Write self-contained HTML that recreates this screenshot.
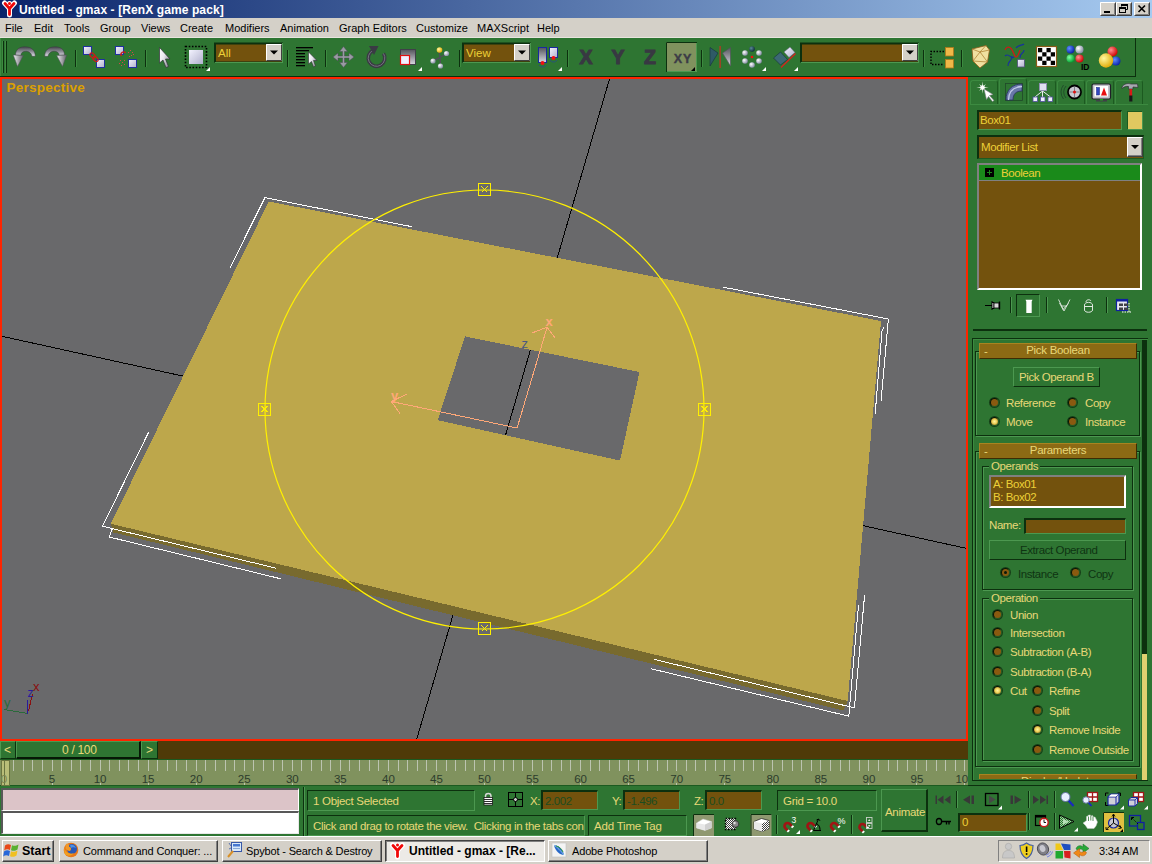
<!DOCTYPE html>
<html><head><meta charset="utf-8"><title>gmax</title>
<style>
html,body{margin:0;padding:0}
body{width:1152px;height:864px;position:relative;overflow:hidden;background:#2e7532;font-family:"Liberation Sans",sans-serif;font-size:11.5px}
.a{position:absolute;box-sizing:border-box}
.t{position:absolute;margin-top:1px;color:#e8d878;font-size:11.5px;letter-spacing:-0.42px;white-space:pre;line-height:13px}
.dk{color:#0e3412}
.sunk{border:1px solid;border-color:#0c300e #4c9850 #4c9850 #0c300e}
.rais{border:1px solid;border-color:#4c9850 #0c300e #0c300e #4c9850}
.brown{background:#73520d}
.hdr{background:#8c6a14;border:1px solid;border-color:#a88420 #3c2c04 #3c2c04 #a88420;color:#e8d878;text-align:center;font-size:11.5px;line-height:13px;letter-spacing:-0.3px}
.grp{border:1px solid #0c300e;box-shadow:1px 1px 0 #4c9850, inset 1px 1px 0 #4c9850}
.rad{position:absolute;width:9px;height:9px;border-radius:50%;background:#8a5a10;border:1px solid;border-color:#061806 #205c24 #205c24 #061806;box-sizing:border-box;box-shadow:0 0 0 1px #163f18}
.rad.on{background:radial-gradient(circle at 50% 50%,#fff0a0 0,#f0d860 40%,#8a5a10 100%)}
.rad.dis::after{content:"";position:absolute;left:2px;top:2px;width:3px;height:3px;border-radius:50%;background:#0a1a0a}
.sep{position:absolute;width:2px;border-left:1px solid #0c300e;border-right:1px solid #4c9850;box-sizing:border-box}
.tab{top:80px;width:28px;height:25px;border:1px solid;border-color:#3c8a40 #1c5a20 transparent #3c8a40;border-radius:3px 3px 0 0}
.tab.sel{top:78px;height:27px}
.tsb{background:#2e7532;border:1px solid;border-color:#4c9850 #0c300e #0c300e #4c9850}
.tbtn{top:840px;height:22px;background:#d4d0c8;border:1px solid;border-color:#fff #404040 #404040 #fff;box-shadow:inset -1px -1px 0 #808080}
.tbtn.act{background:#eceae6;border-color:#404040 #fff #fff #404040;box-shadow:inset 1px 1px 0 #808080}
.tl{top:845px;font-size:11px;line-height:13px;white-space:pre;letter-spacing:-0.15px}
.menu span{position:absolute;top:4px;font-size:11px;color:#000}
.win{font-family:"Liberation Sans",sans-serif;color:#000}
</style></head><body>

<!-- title bar -->
<div class="a" id="title" style="left:0;top:0;width:1152px;height:18px;background:linear-gradient(90deg,#0a246a,#a6caf0)"></div>
<div class="a" style="left:19px;top:3px;color:#fff;font-weight:bold;font-size:12px;line-height:15px;white-space:pre;letter-spacing:0.1px">Untitled - gmax - [RenX game pack]</div>

<!-- menu bar -->
<div class="a menu" id="menu" style="left:0;top:18px;width:1152px;height:20px;background:#d4d0c8;border-bottom:1px solid #e8e4de">
<span style="left:5px">File</span><span style="left:34px">Edit</span><span style="left:64px">Tools</span><span style="left:100px">Group</span><span style="left:141px">Views</span><span style="left:180px">Create</span><span style="left:225px">Modifiers</span><span style="left:280px">Animation</span><span style="left:339px">Graph Editors</span><span style="left:416px">Customize</span><span style="left:477px">MAXScript</span><span style="left:537px">Help</span>
</div>

<!-- toolbar -->
<div class="a" id="toolbar" style="left:0;top:38px;width:1152px;height:39px;background:#2e7532"></div>

<svg class="a" id="tbsvg" style="left:0;top:38px" width="1152" height="39" viewBox="0 38 1152 39">
<defs>
<linearGradient id="gGrey" x1="0" y1="0" x2="1" y2="1"><stop offset="0" stop-color="#e8e8ec"/><stop offset="1" stop-color="#50505a"/></linearGradient>
<linearGradient id="gArc" x1="0" y1="0" x2="0" y2="1"><stop offset="0" stop-color="#44444c"/><stop offset="0.5" stop-color="#8c8c96"/><stop offset="1" stop-color="#e0e0e8"/></linearGradient><linearGradient id="gHead" x1="0" y1="0" x2="1" y2="0"><stop offset="0" stop-color="#f0f0f4"/><stop offset="1" stop-color="#606068"/></linearGradient>
<linearGradient id="gCur" x1="0" y1="0" x2="1" y2="0.6"><stop offset="0" stop-color="#ffffff"/><stop offset="0.5" stop-color="#e8e8ee"/><stop offset="1" stop-color="#909098"/></linearGradient>
<linearGradient id="gGreyV" x1="0" y1="0" x2="0" y2="1"><stop offset="0" stop-color="#54545c"/><stop offset="1" stop-color="#d8d8e0"/></linearGradient>
<linearGradient id="gSq" x1="0" y1="0" x2="1" y2="1"><stop offset="0" stop-color="#f4f4ff"/><stop offset="1" stop-color="#b0b0cc"/></linearGradient>
<radialGradient id="gBall" cx="0.35" cy="0.35" r="0.7"><stop offset="0" stop-color="#fff"/><stop offset="1" stop-color="#8088a0"/></radialGradient>
<radialGradient id="gTeal" cx="0.35" cy="0.35" r="0.7"><stop offset="0" stop-color="#5a8a98"/><stop offset="1" stop-color="#0c2c38"/></radialGradient>
<radialGradient id="gYel" cx="0.35" cy="0.35" r="0.7"><stop offset="0" stop-color="#fff8a0"/><stop offset="1" stop-color="#e0a800"/></radialGradient>
<radialGradient id="gRed" cx="0.35" cy="0.35" r="0.7"><stop offset="0" stop-color="#ff9090"/><stop offset="1" stop-color="#d00000"/></radialGradient>
<radialGradient id="gBlu" cx="0.35" cy="0.35" r="0.7"><stop offset="0" stop-color="#6090ff"/><stop offset="1" stop-color="#0820a8"/></radialGradient>
<radialGradient id="gGrn" cx="0.35" cy="0.35" r="0.7"><stop offset="0" stop-color="#80ffa0"/><stop offset="1" stop-color="#00a030"/></radialGradient>
</defs>
<!-- grip -->
<rect x="0" y="38" width="1" height="38" fill="#3c8a40"/><rect x="3" y="41" width="1" height="32" fill="#0c300e"/><rect x="2" y="41" width="1" height="32" fill="#3c8a40"/>
<rect x="6" y="41" width="1" height="32" fill="#0c300e"/><rect x="5" y="41" width="1" height="32" fill="#3c8a40"/>
<!-- undo -->
<path d="M15.5 55 C15.5 49 20 46.8 25 46.8 C31 46.8 35.3 50 35.3 56.3 L32 56.3 C31 52.5 28.5 51.3 25.8 51.3 C23 51.3 21 52.5 20.8 55.3 Z" fill="url(#gArc)" stroke="#383840" stroke-width="0.5"/><path d="M13.3 55 L23.3 55.5 L17.5 66.5 Z" fill="url(#gHead)" stroke="#505058" stroke-width="0.5"/>
<!-- redo -->
<path d="M 64.5 55.0 C 64.5 49.0 60.0 46.8 55.0 46.8 C 49.0 46.8 44.7 50.0 44.7 56.3 L 48.0 56.3 C 49.0 52.5 51.5 51.3 54.2 51.3 C 57.0 51.3 59.0 52.5 59.2 55.3 Z" fill="url(#gArc)" stroke="#383840" stroke-width="0.5"/><path d="M 66.7 55.0 L 56.7 55.5 L 62.5 66.5 Z" fill="url(#gHead)" stroke="#505058" stroke-width="0.5"/>
<rect x="75" y="50" width="1" height="17" fill="#0c300e"/><rect x="76" y="50" width="1" height="17" fill="#3c8a40"/>
<!-- link -->
<rect x="83.500" y="46.500" width="8" height="8" fill="url(#gSq)" stroke="#2030a0"/>
<rect x="96.500" y="59.500" width="8" height="8" fill="url(#gSq)" stroke="#2030a0"/>
<ellipse cx="92.500" cy="55.500" rx="2" ry="3" transform="rotate(-45 92.500 55.500)" fill="none" stroke="#d01818" stroke-width="1.2"/>
<ellipse cx="95.500" cy="59" rx="2" ry="3" transform="rotate(-45 95.500 59)" fill="none" stroke="#d01818" stroke-width="1.2"/>
<!-- unlink -->
<rect x="115.500" y="46.500" width="8" height="8" fill="url(#gSq)" stroke="#2030a0"/>
<rect x="128.500" y="59.500" width="8" height="8" fill="url(#gSq)" stroke="#2030a0"/>
<path d="M121.500 56 A2.500 2.500 0 0 1 125.500 53" fill="none" stroke="#d01818" stroke-width="1.3"/>
<g fill="#d04848"><rect x="128" y="52" width="1" height="1"/><rect x="130" y="50" width="1" height="1"/><rect x="132" y="52" width="1" height="1"/><rect x="131" y="55" width="1" height="1"/><rect x="133" y="54" width="1" height="1"/><rect x="129" y="56" width="1" height="1"/><rect x="120" y="60" width="1" height="1"/><rect x="122" y="62" width="1" height="1"/><rect x="119" y="63" width="1" height="1"/><rect x="124" y="60" width="1" height="1"/><rect x="121" y="65" width="1" height="1"/><rect x="124" y="64" width="1" height="1"/></g>
<rect x="145" y="50" width="1" height="17" fill="#0c300e"/><rect x="146" y="50" width="1" height="17" fill="#3c8a40"/>
<!-- select arrow -->
<path d="M159.500 47.500 L159.500 63 L163 60 L166 67.500 L168.500 66.500 L165.500 59 L170 59 Z" fill="url(#gCur)" stroke="#303038" stroke-width="0.7"/>
<!-- region select -->
<rect x="185.500" y="46.500" width="21" height="21" fill="none" stroke="#000" stroke-width="1.6" stroke-dasharray="1.6 1.6"/>
<rect x="189" y="50" width="14" height="14" fill="url(#gSq)"/>
<path d="M210 67 L210 71 L206 71 Z" fill="#fff"/>
<!-- All dropdown -->
<rect x="214" y="42.500" width="69" height="20" fill="#0c300e"/><rect x="215" y="62" width="68" height="1" fill="#4c9850"/><rect x="282" y="43" width="1" height="20" fill="#4c9850"/>
<rect x="216" y="44.500" width="66" height="17" fill="#73520d"/>
<rect x="266" y="44" width="16" height="17" fill="#d4d0c8"/><path d="M266.500 60.500 L266.500 44.500 L281.500 44.500" fill="none" stroke="#fff"/><path d="M266.500 60.500 L281.500 60.500 L281.500 44.500" fill="none" stroke="#404040"/>
<path d="M270 50.500 L278 50.500 L274 54.500 Z" fill="#000"/>
<text x="218" y="57" font-family="Liberation Sans, sans-serif" font-size="11.500" fill="#ecd038">All</text>
<rect x="287" y="50" width="1" height="17" fill="#0c300e"/><rect x="288" y="50" width="1" height="17" fill="#3c8a40"/>
<!-- select by name -->
<g fill="#000"><rect x="296" y="47" width="17" height="1.3"/><rect x="296" y="50" width="13" height="1.3"/><rect x="296" y="53" width="9" height="1.3"/><rect x="296" y="56" width="9" height="1.3"/><rect x="296" y="59" width="9" height="1.3"/><rect x="296" y="62" width="9" height="1.3"/><rect x="296" y="65" width="9" height="1.3"/></g>
<path d="M308.500 52 L308.500 64 L311.500 61.500 L313.500 67 L315.500 66 L313.500 60.500 L317 60.500 Z" fill="url(#gCur)" stroke="#303038" stroke-width="0.6"/>
<rect x="325" y="50" width="1" height="17" fill="#0c300e"/><rect x="326" y="50" width="1" height="17" fill="#3c8a40"/>
<!-- move -->
<g fill="#9a9aa4" stroke="#4a4a54" stroke-width="0.5"><path d="M343.500 46.500 L347.500 51.500 L344.500 51.500 L344.500 56 L349 56 L349 53 L354 57 L349 61 L349 58 L344.500 58 L344.500 62.500 L347.500 62.500 L343.500 67.500 L339.500 62.500 L342.500 62.500 L342.500 58 L338 58 L338 61 L333 57 L338 53 L338 56 L342.500 56 L342.500 51.500 L339.500 51.500 Z"/></g>
<!-- rotate -->
<path d="M373 50.500 A8.300 8.300 0 1 0 383.500 53.500" fill="none" stroke="#3a3a44" stroke-width="3.6"/>
<path d="M373 50.500 A8.300 8.300 0 1 0 383.500 53.500" fill="none" stroke="#787884" stroke-width="0.9"/>
<path d="M369 46 L378.500 46 L374 55 Z" fill="#3a3a44"/>
<!-- scale -->
<rect x="400.500" y="49.500" width="15" height="15" fill="url(#gGreyV)" stroke="#40404a"/>
<rect x="400.500" y="55.500" width="9" height="9" fill="#f0f0ff" stroke="#e01010" stroke-width="1.2"/>
<path d="M422 67 L422 71 L418 71 Z" fill="#fff"/>
<!-- manipulate -->
<g stroke="#50505a" stroke-width="1.4"><line x1="440" y1="57.500" x2="439" y2="50"/><line x1="440" y1="57.500" x2="446" y2="54"/><line x1="440" y1="57.500" x2="433" y2="61"/><line x1="440" y1="57.500" x2="440.500" y2="66"/></g>
<circle cx="439.500" cy="50" r="2.800" fill="url(#gYel)"/><circle cx="446.500" cy="53.500" r="2.600" fill="url(#gBall)"/><circle cx="433" cy="61" r="2.600" fill="url(#gBall)"/><circle cx="440.500" cy="66" r="2.600" fill="url(#gBall)"/>
<rect x="459" y="50" width="1" height="17" fill="#0c300e"/><rect x="460" y="50" width="1" height="17" fill="#3c8a40"/>
<!-- View dropdown -->
<rect x="462" y="42.500" width="69" height="20" fill="#0c300e"/><rect x="463" y="62" width="68" height="1" fill="#4c9850"/><rect x="530" y="43" width="1" height="20" fill="#4c9850"/>
<rect x="464" y="44.500" width="66" height="17" fill="#73520d"/>
<rect x="514" y="44" width="16" height="17" fill="#d4d0c8"/><path d="M514.500 60.500 L514.500 44.500 L529.500 44.500" fill="none" stroke="#fff"/><path d="M514.500 60.500 L529.500 60.500 L529.500 44.500" fill="none" stroke="#404040"/>
<path d="M518 50.500 L526 50.500 L522 54.500 Z" fill="#000"/>
<text x="466" y="57" font-family="Liberation Sans, sans-serif" font-size="11.500" fill="#ecd038">View</text>
<!-- pivot -->
<rect x="538.500" y="47.500" width="8" height="15" fill="url(#gGreyV)" stroke="#1828a0"/>
<rect x="549.500" y="47.500" width="8" height="10" fill="url(#gSq)" stroke="#1828a0"/>
<circle cx="542.500" cy="63" r="2" fill="#f01010"/><circle cx="553.500" cy="58" r="2" fill="#f01010"/>
<path d="M539 65 A4 4 0 0 0 546 65 M550 60 A4 4 0 0 0 557 60" fill="none" stroke="#284a8a" stroke-width="0.8"/>
<path d="M562 67 L562 71 L558 71 Z" fill="#fff"/>
<rect x="567" y="50" width="1" height="17" fill="#0c300e"/><rect x="568" y="50" width="1" height="17" fill="#3c8a40"/>
<!-- X Y Z -->
<g font-family="Liberation Sans, sans-serif" font-weight="bold" font-size="19.5" fill="#383842" stroke="#383842" stroke-width="1.1" text-anchor="middle"><text x="586" y="64">X</text><text x="618" y="64">Y</text><text x="650" y="64">Z</text></g>
<rect x="666" y="42" width="31" height="30" fill="#80925e"/><path d="M666.500 72 L666.500 42.500 L697 42.500" fill="none" stroke="#0c300e"/><path d="M667 71.500 L696.500 71.500 L696.500 43" fill="none" stroke="#4c9850"/>
<text x="683" y="63" font-family="Liberation Sans, sans-serif" font-weight="bold" font-size="12.500" fill="#3c3c46" stroke="#3c3c46" stroke-width="0.4" text-anchor="middle" letter-spacing="1">XY</text>
<path d="M695 67 L695 71 L691 71 Z" fill="#000"/>
<rect x="701" y="50" width="1" height="17" fill="#0c300e"/><rect x="702" y="50" width="1" height="17" fill="#3c8a40"/>
<!-- mirror -->
<path d="M710 47.500 L710 66 L718 53 Z" fill="#2e5a66" stroke="#14323c" stroke-width="0.6"/>
<path d="M730.500 47.500 L730.500 66 L722.500 53 Z" fill="url(#gGreyV)" stroke="#50505a" stroke-width="0.6"/>
<rect x="719.500" y="46" width="1.200" height="22" fill="#c83020"/>
<!-- array -->
<circle cx="752" cy="49" r="2.800" fill="url(#gTeal)"/><circle cx="745" cy="53" r="2.800" fill="url(#gBall)"/><circle cx="759" cy="53" r="2.800" fill="url(#gBall)"/><circle cx="745" cy="61" r="2.800" fill="url(#gBall)"/><circle cx="759" cy="61" r="2.800" fill="url(#gBall)"/><circle cx="752" cy="65" r="2.800" fill="url(#gBall)"/><circle cx="752" cy="57" r="1.300" fill="#f01010"/>
<path d="M766 67 L766 71 L762 71 Z" fill="#fff"/>
<!-- align -->
<path d="M773.500 58 L780.500 52 L787.500 59.500 L780.500 65 Z" fill="#3c6874" stroke="#14323c" stroke-width="0.6"/>
<path d="M784 52 L790 47 L795 52.500 L789 57.500 Z" fill="url(#gSq)" stroke="#60607a" stroke-width="0.5"/>
<line x1="781" y1="67.500" x2="795.500" y2="53.500" stroke="#d82020" stroke-width="1.300"/>
<path d="M798 67 L798 71 L794 71 Z" fill="#fff"/>
<!-- named selection dropdown -->
<rect x="800" y="42.500" width="119" height="20" fill="#0c300e"/><rect x="801" y="62" width="118" height="1" fill="#4c9850"/><rect x="918" y="43" width="1" height="20" fill="#4c9850"/>
<rect x="802" y="44.500" width="116" height="17" fill="#73520d"/>
<rect x="902" y="44" width="16" height="17" fill="#d4d0c8"/><path d="M902.500 60.500 L902.500 44.500 L917.500 44.500" fill="none" stroke="#fff"/><path d="M902.500 60.500 L917.500 60.500 L917.500 44.500" fill="none" stroke="#404040"/>
<path d="M906 50.500 L914 50.500 L910 54.500 Z" fill="#000"/>
<rect x="923" y="50" width="1" height="17" fill="#0c300e"/><rect x="924" y="50" width="1" height="17" fill="#3c8a40"/>
<!-- group -->
<path d="M944 51.500 L931 51.500 L931 64.500 L944 64.500" fill="none" stroke="#000" stroke-width="1.400" stroke-dasharray="1.500 1.500"/>
<rect x="945.500" y="47.500" width="8" height="8.500" fill="#f0b848" stroke="#b07818" stroke-width="0.8"/><rect x="945.500" y="59.500" width="8" height="8.500" fill="#f0b848" stroke="#b07818" stroke-width="0.8"/>
<rect x="961" y="50" width="1" height="17" fill="#0c300e"/><rect x="962" y="50" width="1" height="17" fill="#3c8a40"/>
<!-- material -->
<path d="M972 49 L986 45.500 L989.500 50 L987.500 62 L980 68 L973 61 Z" fill="#f0e0a0" stroke="#8a5a18" stroke-width="0.8"/>
<path d="M972 49 L980 52 L989.500 50 M980 52 L987.500 62 M980 52 L973 61 L987.500 62 M980 52 L986 45.500 M973 61 L980 68" fill="none" stroke="#a87828" stroke-width="0.7"/>
<!-- track view -->
<path d="M1005 50 C1008 44 1012 48 1014 54 C1016 60 1018 56 1020 50" fill="none" stroke="#d01818" stroke-width="1.200"/>
<path d="M1005 56 C1009 52 1011 60 1014 57 M1008 66 C1008 60 1012 62 1012 56 M1016 48 C1019 44 1022 46 1024 44 M1020 58 C1020 52 1024 54 1024 50" fill="none" stroke="#1830a0" stroke-width="1.100"/>
<rect x="1017.500" y="59.500" width="7" height="7.500" fill="url(#gSq)" stroke="#50507a" stroke-width="0.8"/>
<!-- checker -->
<rect x="1036.500" y="46.500" width="20" height="20" fill="#fff" stroke="#8a5a18" stroke-width="1.200"/>
<g fill="#000"><rect x="1038" y="48" width="4.250" height="4.250"/><rect x="1046.500" y="48" width="4.250" height="4.250"/><rect x="1042.250" y="52.250" width="4.250" height="4.250"/><rect x="1050.750" y="52.250" width="4.250" height="4.250"/><rect x="1038" y="56.500" width="4.250" height="4.250"/><rect x="1046.500" y="56.500" width="4.250" height="4.250"/><rect x="1042.250" y="60.750" width="4.250" height="4.250"/><rect x="1050.750" y="60.750" width="4.250" height="4.250"/></g>
<!-- ID -->
<circle cx="1070.500" cy="49.500" r="4" fill="url(#gBlu)"/><circle cx="1079.500" cy="49.500" r="4" fill="url(#gBall)"/><circle cx="1070.500" cy="58.500" r="4" fill="url(#gGrn)"/><circle cx="1079.500" cy="58.500" r="4" fill="url(#gRed)"/>
<text x="1081" y="69.500" font-family="Liberation Sans, sans-serif" font-weight="bold" font-size="8.500" fill="#000">ID</text>
<!-- render balls -->
<circle cx="1112.500" cy="51.500" r="5" fill="url(#gRed)"/><circle cx="1116" cy="61" r="4.500" fill="url(#gBlu)"/><circle cx="1106" cy="60.500" r="7.200" fill="url(#gYel)"/>
</svg>

<!-- viewport -->
<div class="a" id="vp" style="left:0;top:77px;width:968px;height:664px;background:#69696b;border:2px solid #ff2400"></div>

<svg class="a" id="vpsvg" style="left:2px;top:79px" width="964" height="660" viewBox="2 79 964 660" shape-rendering="crispEdges">
<g fill="none" stroke="#000" stroke-width="1">
<line x1="609.5" y1="79" x2="416.5" y2="740"/>
<line x1="2" y1="336.3" x2="966" y2="548.3"/>
</g>
<!-- box -->
<path d="M110.8 523.75 L847.7 701 L843.5 710.5 L113.5 532.5 Z" fill="#786a2e"/>
<path fill-rule="evenodd" fill="#bda74b" d="M268.8 201.5 L881 321 L847.7 701 L110.8 523.75 Z M465 336.4 L639.5 372 L620 460.6 L437.7 420.2 Z"/>
<!-- transform gizmo -->
<g fill="none" stroke="#ffa878" stroke-width="1">
<polyline points="547.1,327.2 517.1,428 391.4,401.5"/>
<polyline points="532,333 547.1,327.2 555.4,338.2"/>
<polyline points="406.5,394.2 391.4,401.5 400,413.7"/>
</g>
<text x="545.5" y="325.5" font-family="Liberation Sans, sans-serif" font-size="13" font-weight="bold" fill="#ffa878">x</text>
<text x="391" y="399.500" font-family="Liberation Sans, sans-serif" font-size="13" font-weight="bold" fill="#ffa878">y</text>
<text x="521.5" y="348" font-family="Liberation Sans, sans-serif" font-size="13" fill="#4a5a80">z</text>
<!-- selection brackets -->
<g fill="none" stroke="#fff" stroke-width="1">
<polyline points="230.2,267.4 264.9,197.6 412,226.7"/>
<polyline points="723.2,287.2 888.4,319 881,401.3"/>
<polyline points="884,327 882,331 875.2,413.5"/>
<polyline points="148.75,432 102.5,526.25 276.5,568.3"/>
<polyline points="112.5,528.3 109.2,537 280.6,578.75"/>
<polyline points="654,659.3 854.4,707.9 864.6,595"/>
<polyline points="651.3,668.8 848.8,716.2 858.5,605"/>
</g>
<!-- arc rotate trackball -->
<g fill="none" stroke="#fff000" stroke-width="1">
<circle cx="484.5" cy="409.5" r="219.5" shape-rendering="auto" stroke-width="1.2"/>
<g id="hnd"><rect x="478.5" y="183.5" width="12" height="12"/><path d="M481.5 186.5 L487.5 192.5 M487.5 186.5 L481.5 192.5"/></g>
<g transform="translate(0,439)"><rect x="478.5" y="183.5" width="12" height="12"/><path d="M481.5 186.5 L487.5 192.5 M487.5 186.5 L481.5 192.5"/></g>
<g transform="translate(-220,219.5)"><rect x="478.5" y="183.5" width="12" height="12"/><path d="M481.5 186.5 L487.5 192.5 M487.5 186.5 L481.5 192.5"/></g>
<g transform="translate(220,219.5)"><rect x="478.5" y="183.5" width="12" height="12"/><path d="M481.5 186.5 L487.5 192.5 M487.5 186.5 L481.5 192.5"/></g>
</g>
<!-- world axis tripod -->
<g fill="none" stroke-width="1">
<line x1="27.5" y1="713.5" x2="4.5" y2="709.5" stroke="#2a6a3a"/>
<line x1="27.5" y1="714" x2="27.5" y2="700" stroke="#2a1a9c"/>
<line x1="28.5" y1="711" x2="32.5" y2="694" stroke="#8b1010"/>
</g>
<text x="33" y="691" font-family="Liberation Sans, sans-serif" font-size="13" fill="#8b1010">x</text>
<text x="27.5" y="696.5" font-family="Liberation Sans, sans-serif" font-size="12" fill="#2a1a9c">z</text>
<text x="4" y="707" font-family="Liberation Sans, sans-serif" font-size="13" fill="#2a6a3a">y</text>
<text x="6.5" y="92.300" font-family="Liberation Sans, sans-serif" font-size="13.500" font-weight="bold" fill="#dca000" letter-spacing="0.25">Perspective</text>
</svg>

<!-- right panel -->
<div class="a" id="panel" style="left:968px;top:77px;width:184px;height:709px;background:#2e7532"></div>

<!-- panel: tabs -->
<div class="a" style="left:0;top:76px;width:1135px;height:1px;background:#0c300e"></div>
<div class="a" style="left:1135px;top:38px;width:1px;height:39px;background:#0c300e"></div>
<div class="a tab" style="left:970px"></div><div class="a tab sel" style="left:999px"></div><div class="a tab" style="left:1028px"></div><div class="a tab" style="left:1057px"></div><div class="a tab" style="left:1086px"></div><div class="a tab" style="left:1115px"></div>
<div class="a" style="left:970px;top:104px;width:178px;height:1px;background:#3c8a40"></div>
<!-- name + colour -->
<div class="a sunk brown" style="left:977px;top:110px;width:145px;height:20px;border-width:2px 1px 1px 2px"></div>
<div class="t" style="left:980px;top:113px;color:#ecd038">Box01</div>
<div class="a" style="left:1127px;top:111px;width:16px;height:19px;background:#e0c860;border:1px solid;border-color:#1c5a20 #4c9850 #4c9850 #1c5a20"></div>
<!-- modifier list -->
<div class="a sunk brown" style="left:977px;top:135px;width:167px;height:24px;border-width:2px 1px 1px 2px;border-color:#0c300e #1e5a22 #1e5a22 #0c300e"></div>
<div class="t" style="left:981px;top:140px;color:#ecd038">Modifier List</div>
<div class="a" style="left:1127px;top:137px;width:16px;height:20px;background:#d4d0c8;border:1px solid;border-color:#fff #404040 #404040 #fff;box-shadow:inset -1px -1px 0 #808080"></div>
<div class="a" style="left:1131px;top:145px;width:0;height:0;border-left:4px solid transparent;border-right:4px solid transparent;border-top:4px solid #000"></div>
<!-- stack -->
<div class="a brown" style="left:977px;top:163px;width:165px;height:127px;border:2px solid;border-color:#808080 #fff #fff #808080;border-width:2px 2px 2px 2px"></div>
<div class="a" style="left:979px;top:165px;width:161px;height:15px;background:#1a8a1a;border-bottom:1px solid #808080;box-sizing:content-box"></div>
<div class="a" style="left:985px;top:168px;width:9px;height:9px;background:#000"></div>
<div class="a" style="left:987px;top:172px;width:5px;height:1px;background:#1a8a1a"></div>
<div class="a" style="left:989px;top:170px;width:1px;height:5px;background:#1a8a1a"></div>
<div class="t" style="left:1001px;top:166px;color:#ecd038">Boolean</div>
<!-- stack tool icons -->
<div class="sep" style="left:1010px;top:297px;height:16px"></div>
<div class="a sunk" style="left:1016px;top:294px;width:24px;height:23px"></div>
<div class="sep" style="left:1046px;top:297px;height:16px"></div>
<div class="sep" style="left:1106px;top:297px;height:16px"></div>
<div class="a" style="left:973px;top:329px;width:174px;height:2px;background:#0c300e"></div>
<!-- rollouts outer frame -->
<div class="a" style="left:972px;top:338px;width:176px;height:443px;border:1px solid #0c300e;border-right:none;box-shadow:inset 1px 1px 0 #3c8a40"></div>
<div class="a" style="left:1142px;top:340px;width:5px;height:314px;background:#0c300e"></div>
<div class="a" style="left:1142px;top:654px;width:5px;height:126px;background:#e0d070"></div>
<!-- Pick Boolean rollout -->
<div class="a grp" style="left:975px;top:351px;width:165px;height:85px"></div>
<div class="a hdr" style="left:979px;top:343px;width:158px;height:16px">Pick Boolean</div>
<div class="t" style="left:984px;top:344px">-</div>
<div class="a rais" style="left:1013px;top:367px;width:87px;height:20px"></div>
<div class="t" style="left:1019px;top:370px">Pick Operand B</div>
<div class="rad" style="left:990px;top:398px"></div><div class="t" style="left:1006px;top:396px">Reference</div>
<div class="rad" style="left:1068px;top:398px"></div><div class="t" style="left:1085px;top:396px">Copy</div>
<div class="rad on" style="left:990px;top:417px"></div><div class="t" style="left:1006px;top:415px">Move</div>
<div class="rad" style="left:1068px;top:417px"></div><div class="t" style="left:1085px;top:415px">Instance</div>
<!-- Parameters rollout -->
<div class="a grp" style="left:975px;top:451px;width:165px;height:316px"></div>
<div class="a hdr" style="left:979px;top:443px;width:158px;height:16px">Parameters</div>
<div class="t" style="left:984px;top:444px">-</div>
<div class="a grp" style="left:982px;top:466px;width:151px;height:124px"></div>
<div class="t" style="left:989px;top:459px;background:#2e7532;padding:0 2px">Operands</div>
<div class="a brown" style="left:989px;top:475px;width:137px;height:33px;border:2px solid;border-color:#808080 #fff #fff #808080"></div>
<div class="t" style="left:993px;top:477px;color:#ecd038">A: Box01</div>
<div class="t" style="left:993px;top:490px;color:#ecd038">B: Box02</div>
<div class="t" style="left:989px;top:518px">Name:</div>
<div class="a sunk brown" style="left:1024px;top:518px;width:102px;height:16px;border-width:2px 1px 1px 2px"></div>
<div class="a rais" style="left:989px;top:540px;width:137px;height:20px"></div>
<div class="t dk" style="left:1020px;top:543px">Extract Operand</div>
<div class="rad dis" style="left:1001px;top:568px"></div><div class="t dk" style="left:1018px;top:567px">Instance</div>
<div class="rad" style="left:1071px;top:568px"></div><div class="t dk" style="left:1088px;top:567px">Copy</div>
<div class="a grp" style="left:982px;top:598px;width:151px;height:163px"></div>
<div class="t" style="left:989px;top:591px;background:#2e7532;padding:0 2px">Operation</div>
<div class="rad" style="left:993px;top:610px"></div><div class="t" style="left:1010px;top:608px">Union</div>
<div class="rad" style="left:993px;top:628px"></div><div class="t" style="left:1010px;top:626px">Intersection</div>
<div class="rad" style="left:993px;top:647px"></div><div class="t" style="left:1010px;top:645px">Subtraction (A-B)</div>
<div class="rad" style="left:993px;top:667px"></div><div class="t" style="left:1010px;top:665px">Subtraction (B-A)</div>
<div class="rad on" style="left:993px;top:686px"></div><div class="t" style="left:1010px;top:684px">Cut</div>
<div class="rad" style="left:1033px;top:686px"></div><div class="t" style="left:1049px;top:684px">Refine</div>
<div class="rad" style="left:1033px;top:706px"></div><div class="t" style="left:1049px;top:704px">Split</div>
<div class="rad on" style="left:1033px;top:725px"></div><div class="t" style="left:1049px;top:723px">Remove Inside</div>
<div class="rad" style="left:1033px;top:745px"></div><div class="t" style="left:1049px;top:743px">Remove Outside</div>
<!-- next rollout (clipped) -->
<div class="a" style="left:979px;top:774px;width:158px;height:5px;overflow:hidden"><div class="hdr" style="height:16px;box-sizing:border-box;margin-top:0"><span style="position:relative;top:0px">Display/Update</span></div></div>
<div class="a" style="left:968px;top:785px;width:184px;height:1px;background:#0c300e"></div>

<!-- title icon + buttons -->
<svg class="a" style="left:0;top:0" width="1152" height="18" viewBox="0 0 1152 18">
<path d="M9.500 15 L9.500 8.500 L4.500 3 M9.500 8.500 L14.500 3" fill="none" stroke="#fff" stroke-width="5" stroke-linecap="round"/>
<circle cx="9.500" cy="3.500" r="2.600" fill="#fff"/>
<path d="M9.500 14.500 L9.500 8.500 L5 3.500 M9.500 8.500 L14 3.500" fill="none" stroke="#f00808" stroke-width="2.800" stroke-linecap="round"/>
<circle cx="9.500" cy="3.500" r="1.500" fill="#f00808"/>
<g>
<rect x="1100" y="2" width="16" height="14" fill="#d4d0c8"/><path d="M1100.500 15.500V2.500H1115.500" fill="none" stroke="#fff"/><path d="M1100.500 15.500H1115.500V2.500" fill="none" stroke="#404040"/><path d="M1101.500 14.500H1114.500V3.500" fill="none" stroke="#808080"/>
<rect x="1104" y="11" width="6" height="2" fill="#000"/>
<rect x="1116" y="2" width="16" height="14" fill="#d4d0c8"/><path d="M1116.500 15.500V2.500H1131.500" fill="none" stroke="#fff"/><path d="M1116.500 15.500H1131.500V2.500" fill="none" stroke="#404040"/><path d="M1117.500 14.500H1130.500V3.500" fill="none" stroke="#808080"/>
<path d="M1121.500 6.500V4.500H1127.500V9.500H1125.500" fill="none" stroke="#000"/><rect x="1121" y="4" width="7" height="2" fill="#000"/>
<rect x="1119.500" y="7.500" width="6" height="5" fill="none" stroke="#000"/><rect x="1119" y="7" width="7" height="2" fill="#000"/>
<rect x="1134" y="2" width="16" height="14" fill="#d4d0c8"/><path d="M1134.500 15.500V2.500H1149.500" fill="none" stroke="#fff"/><path d="M1134.500 15.500H1149.500V2.500" fill="none" stroke="#404040"/><path d="M1135.500 14.500H1148.500V3.500" fill="none" stroke="#808080"/>
<path d="M1138.500 5.500L1145 12M1145 5.500L1138.500 12" stroke="#000" stroke-width="1.600" fill="none"/>
</g>
</svg>
<!-- panel tab icons + stack icons -->
<svg class="a" style="left:968px;top:77px" width="184" height="260" viewBox="968 77 184 260">
<!-- create -->
<polygon points="982.5,81.3 983.0,86.3 986.0,84.0 983.7,87.0 988.7,87.5 983.7,88.0 986.0,91.0 983.0,88.7 982.5,93.7 982.0,88.7 979.0,91.0 981.3,88.0 976.3,87.5 981.3,87.0 979.0,84.0 982.0,86.3" fill="#fff"/><circle cx="982.5" cy="87.5" r="2.6" fill="#fff" opacity="0.55"/>
<path d="M984 89 L993 94.500 L989.500 95.500 L994 100.500 L992.500 101.500 L988.500 96.500 L986.500 99.500 Z" fill="#fff" stroke="#80808a" stroke-width="0.6"/>
<!-- modify -->
<rect x="1005.500" y="83.500" width="17" height="17" fill="none" stroke="#20482a" stroke-width="0.8"/>
<path d="M1006 100 C1006 90 1012 84 1022 84 L1022 91 C1016 91 1013 94 1013 100 Z" fill="#6878a8" stroke="#283060" stroke-width="0.8"/>
<path d="M1008.500 100 C1008.500 92 1013 87 1022 86.500" fill="none" stroke="#c0c8e8" stroke-width="1.300"/>
<!-- hierarchy -->
<path d="M1042.500 90 V94.500 M1035 97 L1042.500 91 L1050.500 97 M1042.500 94 V97" fill="none" stroke="#e8e8f0" stroke-width="1"/>
<rect x="1039.500" y="83.500" width="7" height="7" fill="#e0e0f0" stroke="#9090b0"/>
<rect x="1033" y="97" width="4.500" height="4.500" fill="#f0f0ff" stroke="#5050a0" stroke-width="0.8"/><rect x="1040.500" y="97" width="4.500" height="4.500" fill="#f0f0ff" stroke="#5050a0" stroke-width="0.8"/><rect x="1048" y="97" width="4.500" height="4.500" fill="#f0f0ff" stroke="#5050a0" stroke-width="0.8"/>
<!-- motion -->
<circle cx="1074.500" cy="92" r="6.500" fill="#c8c8d0" stroke="#000" stroke-width="1.800"/>
<path d="M1074.500 86 V98 M1068.500 92 H1080.500" stroke="#606068" stroke-width="0.7"/>
<circle cx="1074.500" cy="92" r="1.500" fill="#e01010"/>
<path d="M1066 86 A9 9 0 0 0 1066 98 M1063.500 85 A11 11 0 0 0 1063.500 99" fill="none" stroke="#20482a" stroke-width="0.9"/>
<!-- display -->
<rect x="1092" y="84" width="18.500" height="15" rx="1.500" fill="#c0c0c8" stroke="#202028" stroke-width="1.200"/>
<rect x="1094.500" y="86" width="13.500" height="10.500" fill="#fff"/>
<rect x="1096.500" y="87.500" width="3" height="7.500" fill="#3048c0" stroke="#102080" stroke-width="0.5"/>
<path d="M1104 87.500 L1107 95.500 L1101 95.500 Z" fill="#e81010"/>
<rect x="1096" y="100" width="11" height="1.500" fill="#404048"/><rect x="1100" y="99" width="3" height="1.500" fill="#20a020"/>
<!-- utilities -->
<path d="M1122 87 C1124 83.500 1128 83 1131 84 L1137.500 84 L1138 87.500 L1133 87 L1133 89 L1128.500 89 L1128.500 86.500 C1126 86 1124 87 1122 88.500 Z" fill="#a8a8b0" stroke="#303038" stroke-width="0.7"/>
<rect x="1129.500" y="89" width="2.600" height="7" fill="#d81818"/><rect x="1129.200" y="95.500" width="3.200" height="6" fill="#181818"/>
<!-- pin -->
<path d="M985 305.500 H992" stroke="#000" stroke-width="1"/><path d="M992 301 V310 M992 302.500 H994 V308.500 H992" stroke="#000" stroke-width="1" fill="#fff"/><rect x="994" y="303" width="5" height="5" fill="#d8d8d8" stroke="#000" stroke-width="0.8"/><path d="M999.500 301.500 V309.500" stroke="#000" stroke-width="1.400"/>
<!-- show end result -->
<path d="M1025.500 299.700 H1032.500 L1031.700 301.500 V313 H1026.300 V301.500 Z" fill="#fff"/>
<!-- make unique -->
<path d="M1058.500 299.500 L1064 311 L1070 299.500 M1061.500 306 L1067 306 M1059.500 303 L1063 309.500 L1068.500 303.500" fill="none" stroke="#e0e8e0" stroke-width="0.9"/>
<!-- remove modifier -->
<path d="M1084.500 305 C1084.500 301.500 1092.500 301.500 1092.500 305 V310 C1092.500 313 1084.500 313 1084.500 310 Z M1084.500 306.500 H1092.500 M1086 302 C1086 299.500 1090 299 1091 301" fill="none" stroke="#e0e8e0" stroke-width="1"/>
<!-- configure -->
<rect x="1116.500" y="299.500" width="11" height="11" fill="#e8e8f0" stroke="#1020a0" stroke-width="1.200"/><rect x="1116" y="299" width="12" height="2.500" fill="#1020a0"/>
<g fill="#404048"><rect x="1119" y="303.500" width="4" height="2.500"/><rect x="1124" y="303.500" width="4" height="2.500"/><rect x="1119" y="307.500" width="4" height="2.500"/><rect x="1124" y="307.500" width="4" height="2.500"/></g>
<path d="M1122 312 H1131 M1129 303 V312" stroke="#fff" stroke-width="1" stroke-dasharray="1.500 1"/>
</svg>

<!-- time slider -->
<div class="a" id="tslider" style="left:0;top:741px;width:968px;height:18px;background:#4f3a08"></div>
<div class="a tsb" style="left:0;top:741px;width:16px;height:18px"></div><div class="t" style="left:4px;top:743px;font-size:12px">&lt;</div>
<div class="a tsb" style="left:16px;top:741px;width:125px;height:18px;border-width:1px 2px 2px 1px;border-color:#4c9850 #061806 #061806 #4c9850"></div><div class="t" style="left:62px;top:743px;font-size:12px;letter-spacing:-0.3px">0 / 100</div>
<div class="a tsb" style="left:141px;top:741px;width:17px;height:18px"></div><div class="t" style="left:146px;top:743px;font-size:12px">&gt;</div>
<!-- track bar -->
<div class="a" id="track" style="left:0;top:759px;width:968px;height:27px;background:#80925e;border-top:1px solid #1c5a20;border-bottom:1px solid #1c5a20"></div>
<svg class="a" style="left:0;top:759px" width="968" height="27" viewBox="0 759 968 27" shape-rendering="crispEdges">
<rect x="1" y="760" width="8" height="25" fill="#b8bc78" stroke="#6a7440" stroke-width="1"/>
<path d="M4.5 760V771M4.5 783V785M13.5 760V771M23.5 760V771M32.5 760V771M42.5 760V771M52.5 760V771M52.5 783V785M61.5 760V771M71.5 760V771M80.5 760V771M90.5 760V771M100.5 760V771M100.5 783V785M109.5 760V771M119.5 760V771M128.5 760V771M138.5 760V771M148.5 760V771M148.5 783V785M157.5 760V771M167.5 760V771M176.5 760V771M186.5 760V771M196.5 760V771M196.5 783V785M205.5 760V771M215.5 760V771M225.5 760V771M234.5 760V771M244.5 760V771M244.5 783V785M253.5 760V771M263.5 760V771M273.5 760V771M282.5 760V771M292.5 760V771M292.5 783V785M301.5 760V771M311.5 760V771M321.5 760V771M330.5 760V771M340.5 760V771M340.5 783V785M349.5 760V771M359.5 760V771M369.5 760V771M378.5 760V771M388.5 760V771M388.5 783V785M398.5 760V771M407.5 760V771M417.5 760V771M426.5 760V771M436.5 760V771M436.5 783V785M446.5 760V771M455.5 760V771M465.5 760V771M474.5 760V771M484.5 760V771M484.5 783V785M494.5 760V771M503.5 760V771M513.5 760V771M522.5 760V771M532.5 760V771M532.5 783V785M542.5 760V771M551.5 760V771M561.5 760V771M570.5 760V771M580.5 760V771M580.5 783V785M590.5 760V771M599.5 760V771M609.5 760V771M619.5 760V771M628.5 760V771M628.5 783V785M638.5 760V771M647.5 760V771M657.5 760V771M667.5 760V771M676.5 760V771M676.5 783V785M686.5 760V771M695.5 760V771M705.5 760V771M715.5 760V771M724.5 760V771M724.5 783V785M734.5 760V771M743.5 760V771M753.5 760V771M763.5 760V771M772.5 760V771M772.5 783V785M782.5 760V771M792.5 760V771M801.5 760V771M811.5 760V771M820.5 760V771M820.5 783V785M830.5 760V771M840.5 760V771M849.5 760V771M859.5 760V771M868.5 760V771M868.5 783V785M878.5 760V771M888.5 760V771M897.5 760V771M907.5 760V771M916.5 760V771M916.5 783V785M926.5 760V771M936.5 760V771M945.5 760V771M955.5 760V771M964.5 760V771M964.5 783V785" stroke="#bcc4b0" stroke-width="1" fill="none"/>
<rect x="4" y="760" width="1" height="25" fill="#6a7440"/>
<g font-family="Liberation Sans, sans-serif" font-size="11.5" fill="#2c3c2c" text-anchor="middle" shape-rendering="auto">
<text x="4.0" y="783" fill="#7a8450">0</text>
<text x="52.0" y="783"None>5</text>
<text x="100.1" y="783"None>10</text>
<text x="148.1" y="783"None>15</text>
<text x="196.2" y="783"None>20</text>
<text x="244.2" y="783"None>25</text>
<text x="292.3" y="783"None>30</text>
<text x="340.3" y="783"None>35</text>
<text x="388.4" y="783"None>40</text>
<text x="436.4" y="783"None>45</text>
<text x="484.5" y="783"None>50</text>
<text x="532.5" y="783"None>55</text>
<text x="580.6" y="783"None>60</text>
<text x="628.6" y="783"None>65</text>
<text x="676.7" y="783"None>70</text>
<text x="724.8" y="783"None>75</text>
<text x="772.8" y="783"None>80</text>
<text x="820.8" y="783"None>85</text>
<text x="868.9" y="783"None>90</text>
<text x="916.9" y="783"None>95</text>
<text x="965.0" y="783"None>100</text>
</g></svg>
<!-- status -->
<div class="a" id="status" style="left:0;top:786px;width:1152px;height:50px;background:#2e7532"></div>
<div class="a" style="left:1px;top:788px;width:298px;height:23px;background:#dcc4c8;border:2px solid;border-color:#585858 #fff #fff #585858;border-width:2px 1px 1px 2px"></div>
<div class="a" style="left:1px;top:811px;width:298px;height:23px;background:#fff;border:2px solid;border-color:#585858 #e8e8e8 #e8e8e8 #585858;border-width:2px 1px 1px 2px"></div>
<div class="sep" style="left:303px;top:787px;height:49px"></div>
<div class="a sunk" style="left:307px;top:790px;width:168px;height:21px"></div>
<div class="t" style="left:313px;top:794px;letter-spacing:-0.3px">1 Object Selected</div>
<div class="a sunk" style="left:307px;top:815px;width:278px;height:21px"></div>
<div class="t" style="left:313px;top:819px;letter-spacing:-0.35px">Click and drag to rotate the view.  Clicking in the tabs con</div>
<div class="a" style="left:508px;top:792px;width:15px;height:15px;border:1px solid #000"></div>
<div class="a" style="left:509px;top:799px;width:13px;height:1px;background:#000"></div><div class="a" style="left:515px;top:793px;width:1px;height:13px;background:#000"></div>
<div class="a" style="left:513px;top:797px;width:5px;height:5px;border-radius:50%;background:#c8d0c8;border:1px solid #000"></div>
<div class="t" style="left:530px;top:794px">X:</div>
<div class="a sunk brown" style="left:541px;top:790px;width:57px;height:20px;border-width:2px 1px 1px 2px"></div><div class="t" style="left:545px;top:794px;color:#1c4c20">2.002</div>
<div class="t" style="left:612px;top:794px">Y:</div>
<div class="a sunk brown" style="left:623px;top:790px;width:57px;height:20px;border-width:2px 1px 1px 2px"></div><div class="t" style="left:627px;top:794px;color:#1c4c20">-1.496</div>
<div class="t" style="left:694px;top:794px">Z:</div>
<div class="a sunk brown" style="left:705px;top:790px;width:57px;height:20px;border-width:2px 1px 1px 2px"></div><div class="t" style="left:709px;top:794px;color:#1c4c20">0.0</div>
<div class="a sunk" style="left:777px;top:790px;width:100px;height:21px"></div>
<div class="t" style="left:783px;top:794px;letter-spacing:-0.3px">Grid = 10.0</div>
<div class="a sunk" style="left:588px;top:815px;width:99px;height:21px"></div>
<div class="t" style="left:594px;top:819px;letter-spacing:-0.2px">Add Time Tag</div>
<div class="a rais" style="left:881px;top:789px;width:47px;height:43px;border-width:1px 2px 2px 1px"></div>
<div class="t" style="left:885px;top:805px;letter-spacing:-0.3px">Animate</div>
<div class="a sunk brown" style="left:958px;top:813px;width:69px;height:19px;border-width:2px 1px 1px 2px"></div><div class="t" style="left:962px;top:815px;color:#ecd038">0</div>
<div class="sep" style="left:956px;top:791px;height:17px"></div><div class="sep" style="left:1028px;top:791px;height:17px"></div><div class="sep" style="left:1028px;top:813px;height:17px"></div><div class="sep" style="left:1054px;top:791px;height:17px"></div><div class="sep" style="left:1054px;top:813px;height:17px"></div>
<div class="sep" style="left:776px;top:815px;height:19px"></div><div class="sep" style="left:851px;top:815px;height:19px"></div>
<svg class="a" style="left:0;top:786px" width="1152" height="50" viewBox="0 786 1152 50">
<defs>
<pattern id="dith" width="2" height="2" patternUnits="userSpaceOnUse"><rect width="2" height="2" fill="#fff"/><rect width="1" height="1" fill="#404040"/><rect x="1" y="1" width="1" height="1" fill="#404040"/></pattern>
<pattern id="dithg" width="2" height="2" patternUnits="userSpaceOnUse"><rect width="2" height="2" fill="#9ad09a"/><rect width="1" height="1" fill="#2e7532"/><rect x="1" y="1" width="1" height="1" fill="#2e7532"/></pattern>

</defs>
<!-- lock -->
<path d="M485.500 798 V796 C485.500 792.500 491 792.500 491 796 V798" fill="none" stroke="#d8d8d8" stroke-width="1.500"/>
<rect x="484" y="797.500" width="8.500" height="7.500" fill="#fff" stroke="#181818" stroke-width="0.8"/><path d="M484 799.500 H492.500 M484 801.500 H492.500 M484 803.500 H492.500" stroke="#181818" stroke-width="0.9"/>
<!-- pressed buttons -->
<rect x="693" y="814" width="21" height="22" fill="#8f9870"/><path d="M693.500 836 V814.500 H714" fill="none" stroke="#0c300e"/>
<path d="M696.500 823 L703 819 L711.500 821.500 L711.500 828 L705 830.500 L696.500 828 Z" fill="#fff" stroke="#c8c8c8" stroke-width="0.5"/><path d="M705 824.500 L711.500 821.500 L711.500 828 L705 830.500 Z" fill="#d0d0d0"/><path d="M696.500 823 L705 824.500 L705 830.500 L696.500 828 Z" fill="#e8e8e8"/>
<rect x="725.500" y="818.500" width="10" height="11" fill="url(#dith)" stroke="#000" stroke-width="1.400" stroke-dasharray="1.500 1.500"/>
<circle cx="735.500" cy="824" r="3.300" fill="#888" stroke="#303030" stroke-width="0.8"/><circle cx="734.500" cy="823" r="1.200" fill="#e0e0e0"/>
<rect x="750.500" y="814" width="21" height="22" fill="#8f9870"/><path d="M751 836 V814.500 H771.500" fill="none" stroke="#0c300e"/>
<path d="M754 821.500 L761.500 818.500 L769 820.500 L769 828.500 L762 831.500 L754 829 Z" fill="#fff" stroke="#181818" stroke-width="0.7"/><path d="M762 823.500 L769 820.500 L769 828.500 L762 831.500 Z" fill="url(#dith)"/><path d="M754 821.500 L762 823.500 L762 831.500 L754 829 Z" fill="#e8e8e8"/>
<!-- snaps -->
<g transform="translate(787.5,826) rotate(-45)"><path d="M-3 3.200 V0 A3 3 0 0 1 3 0 V3.200" stroke="#a01414" stroke-width="2.700" fill="none"/><path d="M-3 3.200 V5 M3 3.200 V5" stroke="#fff" stroke-width="2.700" fill="none"/></g>
<text x="791.500" y="823" font-family="Liberation Sans, sans-serif" font-size="8.500" fill="#fff">3</text>
<path d="M800 830 L800 834 L796 834 Z" fill="#fff"/>
<g transform="translate(810.5,826) rotate(-45)"><path d="M-3 3.200 V0 A3 3 0 0 1 3 0 V3.200" stroke="#a01414" stroke-width="2.700" fill="none"/><path d="M-3 3.200 V5 M3 3.200 V5" stroke="#fff" stroke-width="2.700" fill="none"/></g>
<path d="M813.500 830.500 H821 M813.500 830.500 L818.500 819 M820 830 A7 7 0 0 0 816.500 823.500 M818.500 819 l-2 1 M818.500 819 l1.500 1.800" fill="none" stroke="#000" stroke-width="1"/>
<g transform="translate(834,826) rotate(-45)"><path d="M-3 3.200 V0 A3 3 0 0 1 3 0 V3.200" stroke="#a01414" stroke-width="2.700" fill="none"/><path d="M-3 3.200 V5 M3 3.200 V5" stroke="#fff" stroke-width="2.700" fill="none"/></g>
<text x="837.5" y="824" font-family="Liberation Sans, sans-serif" font-size="9" fill="#fff">%</text>
<g transform="translate(862.5,827) rotate(-45)"><path d="M-3 3.200 V0 A3 3 0 0 1 3 0 V3.200" stroke="#a01414" stroke-width="2.700" fill="none"/><path d="M-3 3.200 V5 M3 3.200 V5" stroke="#fff" stroke-width="2.700" fill="none"/></g>
<rect x="866.500" y="817.500" width="5.500" height="5" fill="none" stroke="#c8d0c8" stroke-width="0.9"/><rect x="866.500" y="823.500" width="5.500" height="5" fill="none" stroke="#c8d0c8" stroke-width="0.9"/><path d="M868 821 L869.200 819 L870.500 821 Z M868 825 L869.200 827 L870.500 825 Z" fill="#e0e8e0"/>
<!-- playback -->
<g fill="#383838">
<rect x="935.500" y="795.500" width="1.500" height="8.500"/><path d="M943.500 795.500 V804 L937.500 799.750 Z M950.500 795.500 V804 L944.500 799.750 Z"/>
<path d="M970 795.500 V804 L963 799.750 Z"/><rect x="971.500" y="795.500" width="2.500" height="8.500"/>
<rect x="1010.500" y="795.500" width="2.500" height="8.500"/><path d="M1014.500 795.500 V804 L1021.500 799.750 Z"/>
<path d="M1033 795.500 V804 L1039 799.750 Z M1040 795.500 V804 L1046 799.750 Z"/><rect x="1046.500" y="795.500" width="1.500" height="8.500"/>
</g>
<rect x="985.500" y="793.500" width="12.500" height="12" fill="none" stroke="#000" stroke-width="1.300"/><path d="M989 795.500 V803.500 L995.500 799.500 Z" fill="#484848"/>
<path d="M1002 805.500 L1002 809.500 L998 809.500 Z" fill="#fff"/>
<!-- key -->
<ellipse cx="939" cy="821.500" rx="2.600" ry="3" fill="none" stroke="#000" stroke-width="1.300"/><path d="M941.500 821.500 H951 M946.500 821.500 V824.500 M949 821.500 V824.500" stroke="#000" stroke-width="1.400" fill="none"/>
<!-- time config -->
<rect x="1035.500" y="815.500" width="10" height="10" fill="#2e7532" stroke="#000" stroke-width="1.200"/><rect x="1035" y="815" width="11" height="2.500" fill="#000"/>
<circle cx="1044" cy="822.500" r="4.200" fill="#fff" stroke="#c81818" stroke-width="1.400"/><path d="M1044 819.500 V822.500 H1046" stroke="#000" stroke-width="0.9" fill="none"/>
<!-- zoom -->
<line x1="1068.500" y1="800.500" x2="1073.500" y2="806" stroke="#1828c0" stroke-width="2.200"/><circle cx="1065.500" cy="797" r="4.500" fill="#e8f0ff" stroke="#6070a0" stroke-width="1"/>
<!-- zoom all -->
<rect x="1087.500" y="792.500" width="10" height="9" fill="#fff" stroke="#a01818" stroke-width="1.300"/><path d="M1092.500 792.500 V801.500 M1087.500 797 H1097.500" stroke="#a01818" stroke-width="1.300"/>
<line x1="1088" y1="802" x2="1091.500" y2="806" stroke="#1828c0" stroke-width="1.800"/><circle cx="1086" cy="800" r="3.200" fill="#e8f0ff" stroke="#6070a0" stroke-width="0.9"/>
<!-- zoom extents -->
<path d="M1105.500 796 V793 H1108.500 M1117.500 793 H1120.500 V796 M1105.500 802 V805.500 H1108.500" fill="none" stroke="#000" stroke-width="1"/>
<path d="M1108 797 L1111 794 L1119 794 L1119 802 L1116 805 L1108 805 Z" fill="#d0d0d8" stroke="#1828a0" stroke-width="1.200"/><path d="M1108 797 H1116 V805 M1116 797 L1119 794" fill="none" stroke="#1828a0" stroke-width="1"/><path d="M1108.500 796.500 L1111 794.500 H1118.500 L1116 796.500 Z" fill="#fff"/>
<path d="M1124 805.500 L1124 809.500 L1120 809.500 Z" fill="#fff"/>
<!-- zoom extents all -->
<rect x="1133.500" y="792.500" width="10" height="9" fill="#fff" stroke="#a01818" stroke-width="1.300"/><path d="M1138.500 792.500 V801.500 M1133.500 797 H1143.500" stroke="#a01818" stroke-width="1.300"/>
<path d="M1128.500 800 L1131 797.500 H1137.500 V803.500 L1135 806 H1128.500 Z" fill="#d0d0d8" stroke="#1828a0" stroke-width="1"/><path d="M1128.500 800 H1135 V806 M1135 800 L1137.500 797.500" fill="none" stroke="#1828a0" stroke-width="0.9"/>
<path d="M1148 805.500 L1148 809.500 L1144 809.500 Z" fill="#fff"/>
<!-- FOV -->
<path d="M1059.500 815 L1074 821.500 L1059.500 828.500 Z" fill="url(#dithg)" stroke="#000" stroke-width="1"/><path d="M1063 819 L1069 821.700 L1063 824.500 Z" fill="#b8e0b8"/>
<path d="M1078 827.500 L1078 831.500 L1074 831.500 Z" fill="#fff"/>
<!-- pan hand -->
<path d="M1084.500 822 L1086.500 820.500 L1086.500 816.500 L1088 816 L1088.500 815 L1090.500 815 L1091 816 L1092.500 815.500 L1093.500 817 L1095 817 L1096 819 L1097.500 822 L1096 826 L1094 828.500 L1087.500 828.500 L1085.500 825.500 L1083 823 Z" fill="#fff" stroke="#c0c8c0" stroke-width="0.5"/>
<path d="M1088.500 816.500 V821 M1090.800 815.500 V820.500 M1093 816.500 V821" stroke="#2e7532" stroke-width="0.8"/>
<!-- arc rotate active -->
<rect x="1103" y="812" width="21" height="20" fill="#e0c040"/><path d="M1103.500 832 V812.500 H1124" fill="none" stroke="#0c300e"/>
<circle cx="1113.500" cy="823" r="5" fill="#c8c8d0" stroke="#1828a0" stroke-width="1.200"/><path d="M1113.500 814.500 V823 L1106.500 829 M1113.500 823 L1121 827.500" fill="none" stroke="#000" stroke-width="1"/><path d="M1112 816.500 L1113.500 814 L1115 816.500 M1106 827 L1106 829.500 L1108.500 829.500 M1119.500 825 L1121.500 828 L1118.500 828.500" fill="none" stroke="#000" stroke-width="0.9"/>
<path d="M1123 829 L1123 832 L1120 832 Z" fill="#000"/>
<!-- min/max -->
<rect x="1129.500" y="815.500" width="11" height="10.500" fill="none" stroke="#1020a0" stroke-width="1.300"/><rect x="1137.500" y="822.500" width="6.500" height="7" fill="#2e7532" stroke="#1020a0" stroke-width="1.300"/>
<path d="M1132 818 L1138 824" stroke="#000" stroke-width="1" stroke-dasharray="1.200 1.200"/><path d="M1131.500 820 V817.500 H1134" fill="none" stroke="#000" stroke-width="1"/>
</svg>

<!-- taskbar -->
<div class="a win" id="taskbar" style="left:0;top:836px;width:1152px;height:28px;background:#d4d0c8;border-top:1px solid #fff"></div>
<div class="a tbtn" style="left:2px;width:52px"></div><div class="a win" style="left:22px;top:844px;font-size:12.5px;font-weight:bold;line-height:14px">Start</div>
<div class="a tbtn" style="left:59px;width:159px"></div><div class="a win tl" style="left:83px">Command and Conquer: ...</div>
<div class="a tbtn" style="left:222px;width:160px"></div><div class="a win tl" style="left:246px">Spybot - Search &amp; Destroy</div>
<div class="a tbtn act" style="left:385px;width:160px"></div><div class="a win tl" style="left:409px;top:845px;font-weight:bold;font-size:12px;letter-spacing:0">Untitled - gmax - [Re...</div>
<div class="a tbtn" style="left:548px;width:160px"></div><div class="a win tl" style="left:572px">Adobe Photoshop</div>
<div class="a" style="left:998px;top:840px;width:152px;height:22px;border:1px solid;border-color:#808080 #fff #fff #808080"></div>
<div class="a win tl" style="left:1099px">3:34 AM</div>
<svg class="a" style="left:0;top:836px" width="1152" height="28" viewBox="0 836 1152 28">
<!-- windows flag -->
<path d="M5 845.500 C7 844 9 844 11 845 L10 850 C8 849 6 849 4.200 850.500 Z" fill="#e84818"/>
<path d="M12 845.200 C14 846 16 846 18.500 844.500 L17.500 849.500 C15.500 851 13 851 11 850.200 Z" fill="#58b030"/>
<path d="M4 851.500 C6 850 8 850 10 851 L9 856 C7 855 5 855 3.200 856.500 Z" fill="#2868d8"/>
<path d="M11 851.200 C13 852 15 852 17.500 850.500 L16.500 855.500 C14.500 857 12 857 10 856.200 Z" fill="#f0c020"/>
<!-- firefox -->
<circle cx="71" cy="850" r="7.300" fill="#e87818"/><circle cx="72" cy="849" r="5" fill="#2858b8"/><path d="M64 847 C65 852 69 855 74 853 C72 856 66 857 64.500 853 Z" fill="#f0a020"/><path d="M66 844 C68 843 70 845 69 847 C71 847 72 849 70 851 C68 851 66 850 65.500 848 Z" fill="#f09828"/><path d="M70 845 C72 844 75 845 76 848 C74 847 72 847 71 848 Z" fill="#5090e0"/>
<!-- spybot -->
<rect x="231.500" y="842.500" width="10" height="9" fill="#d8e8f8" stroke="#3858a8" stroke-width="1"/><rect x="233" y="844" width="7" height="2.500" fill="#4878d0"/><rect x="233" y="848" width="7" height="1" fill="#88a8d8"/><path d="M228 857 L233 851" stroke="#d89028" stroke-width="2"/><path d="M229 843 L231 846 M229 849 L231 848" stroke="#3858a8" stroke-width="0.8"/>
<!-- gmax icon -->
<path d="M397.500 857 V850.500 L392.500 845 M397.500 850.500 L402.500 845" fill="none" stroke="#fff" stroke-width="5" stroke-linecap="round"/><circle cx="397.500" cy="845" r="2.600" fill="#fff"/>
<path d="M397.500 856.500 V850.500 L393 845.500 M397.500 850.500 L402 845.500" fill="none" stroke="#f00808" stroke-width="2.800" stroke-linecap="round"/><circle cx="397.500" cy="845" r="1.500" fill="#f00808"/>
<!-- photoshop feather -->
<rect x="552" y="843" width="14" height="14" fill="#f4f4f4" stroke="#c0c0c0" stroke-width="0.6"/>
<path d="M554 845 C558 845 563 849 564 855 C560 855 555 851 554 845 Z" fill="#2868c8"/><path d="M554 845 C557 847 561 851 564 855" stroke="#a0d0f0" stroke-width="0.8" fill="none"/><path d="M556 846 C559 846.500 562 849 563 852" stroke="#38a048" stroke-width="1" fill="none"/>
<!-- tray: user -->
<circle cx="1008.500" cy="846.500" r="3.200" fill="#c8c8c8" stroke="#a0a0a0" stroke-width="0.5"/><path d="M1002.500 858 C1002.500 851 1006 850.500 1008.500 850.500 C1011 850.500 1014.500 851 1014.500 858 Z" fill="#c8c8c8" stroke="#a0a0a0" stroke-width="0.5"/>
<!-- shield -->
<path d="M1026.500 843 C1024 845 1022 845.500 1020 845.500 C1020 852 1022 856 1026.500 858.500 C1031 856 1033 852 1033 845.500 C1031 845.500 1029 845 1026.500 843 Z" fill="#f0d020" stroke="#4860a0" stroke-width="1.200"/><rect x="1025.800" y="846.500" width="1.600" height="5.500" fill="#000"/><rect x="1025.800" y="853.200" width="1.600" height="1.600" fill="#000"/>
<!-- speaker -->
<ellipse cx="1043" cy="849" rx="5.500" ry="6.200" fill="#808088" stroke="#404048" stroke-width="0.8" transform="rotate(-25 1043 849)"/><ellipse cx="1042.500" cy="848.500" rx="2.800" ry="3.500" fill="#c8c8d0" transform="rotate(-25 1042.500 848.500)"/><path d="M1047 857 C1050 856 1052 854 1052.500 851.500 M1046 855 C1048.500 854.500 1050 853 1050.500 851" fill="none" stroke="#6878e0" stroke-width="0.9"/>
<!-- avg -->
<path d="M1055.500 843.500 H1060 L1063 850 H1055.500 Z" fill="#f0c818"/><path d="M1061 843.500 L1070.500 844.500 V850 H1064 Z" fill="#2050c0"/><path d="M1055.500 851 H1063 V858.500 H1055.500 Z" fill="#20a830"/><path d="M1064 851 H1070.500 V858.500 L1064.500 857.500 Z" fill="#d82020"/>
<!-- sync arrows -->
<path d="M1076 849 C1077 845 1081 845 1083 847 L1083 844 L1089 848.500 L1083 853 L1083 850 C1081 848.500 1079 849 1078.500 850.500 Z" fill="#28a838" stroke="#187028" stroke-width="0.5"/>
<path d="M1086.500 852.500 C1085.500 856.500 1081.500 856.500 1079.500 854.500 L1079.500 857.500 L1073.500 853 L1079.500 848.500 L1079.500 851.500 C1081.500 853 1083.500 852.500 1084 851 Z" fill="#f08818" stroke="#b05808" stroke-width="0.5"/>
</svg>


</body></html>
